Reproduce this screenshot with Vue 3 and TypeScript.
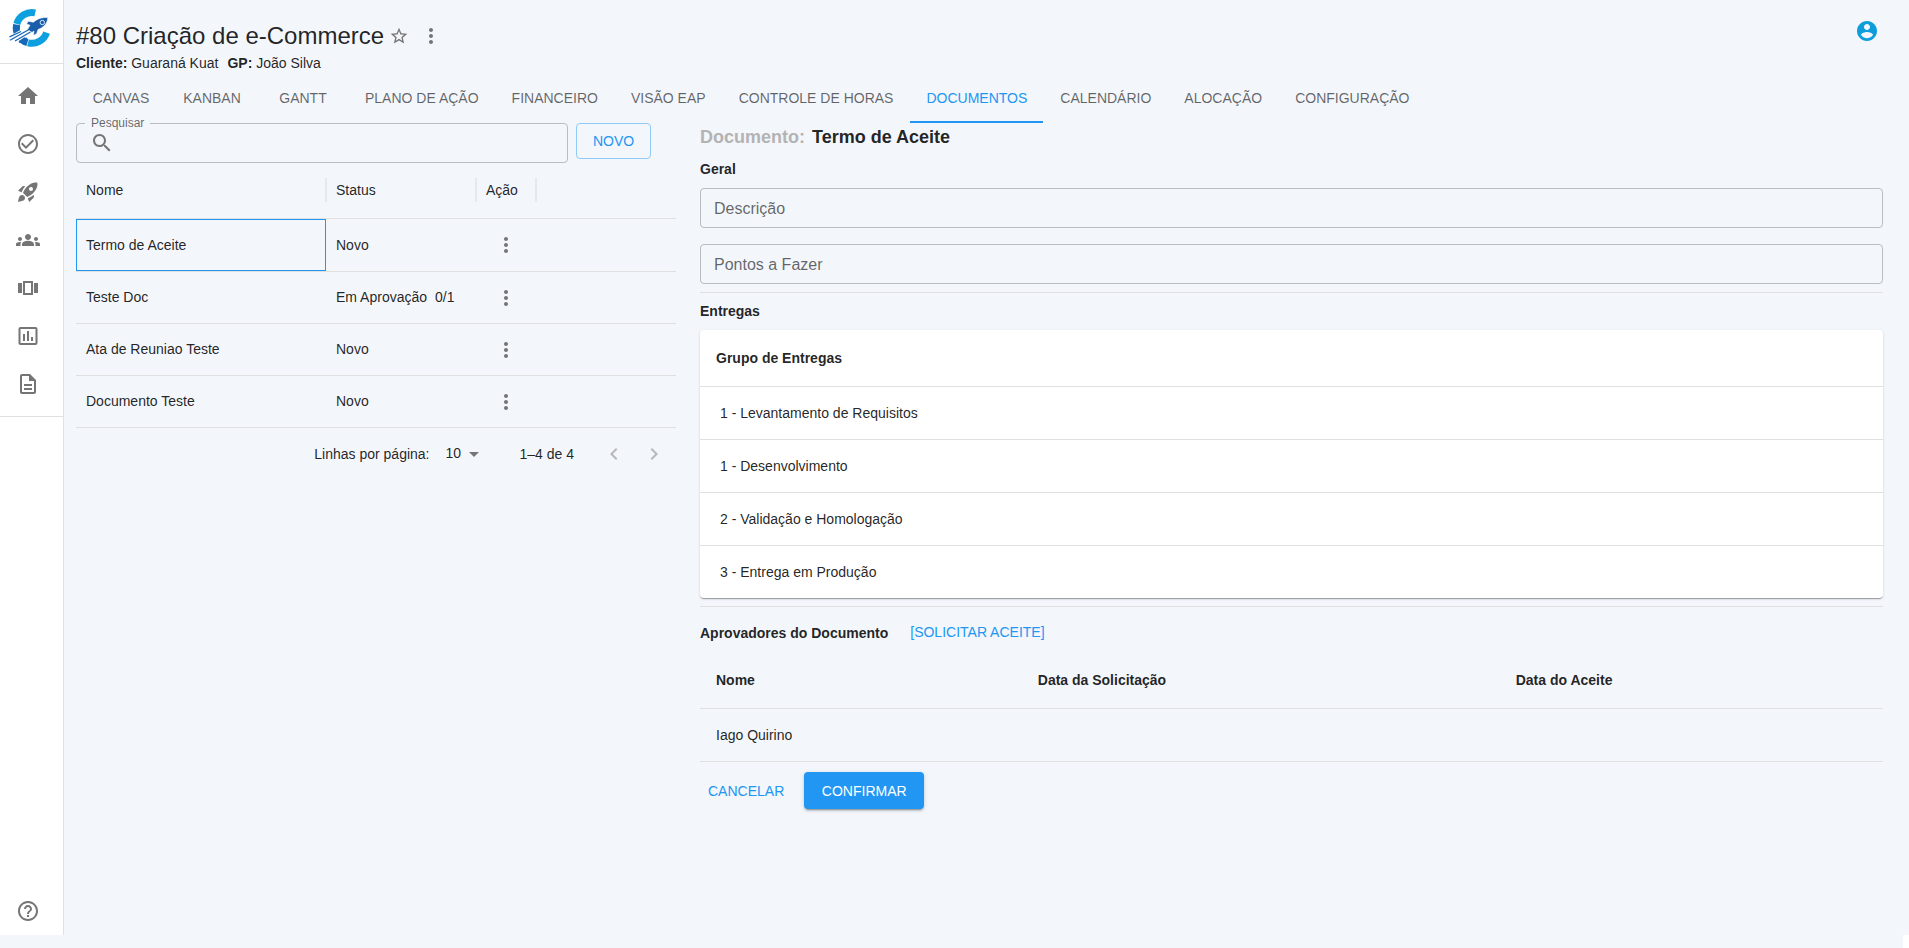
<script setup lang="ts">
import { computed, ref } from 'vue'

interface DocumentRow {
  id: number
  name: string
  status: string
  approvals?: string
}

interface NavItem {
  label: string
  path: string
}

const navItems: NavItem[] = [
  { label: 'Início', path: 'M10 20v-6h4v6h5v-8h3L12 3 2 12h3v8z' },
  { label: 'Tarefas', path: 'M16.59 7.58L10 14.17l-3.59-3.58L5 12l5 5 8-8zM12 2C6.48 2 2 6.48 2 12s4.48 10 10 10 10-4.48 10-10S17.52 2 12 2zm0 18c-4.42 0-8-3.58-8-8s3.58-8 8-8 8 3.58 8 8-3.58 8-8 8z' },
  { label: 'Projetos', path: 'M9.19 6.35c-2.04 2.29-3.44 5.58-3.57 5.89L2 10.69l4.05-4.05c.47-.47 1.15-.68 1.81-.55l1.33.26zM11.17 17s3.74-1.55 5.89-3.7c5.4-5.4 4.5-9.62 4.21-10.57-.95-.3-5.17-1.19-10.57 4.21C8.55 9.09 7 12.83 7 12.83L11.17 17zm6.48-2.19c-2.29 2.04-5.58 3.44-5.89 3.57L13.31 22l4.05-4.05c.47-.47.68-1.15.55-1.81l-.26-1.33zM9 18c0 .83-.34 1.58-.88 2.12C6.94 21.3 2 22 2 22s.7-4.94 1.88-6.12A2.996 2.996 0 0 1 9 18zm4-9c0-1.1.9-2 2-2s2 .9 2 2-.9 2-2 2-2-.9-2-2z' },
  { label: 'Equipes', path: 'M12 12.75c1.63 0 3.07.39 4.24.9 1.08.48 1.76 1.56 1.76 2.73V18H6v-1.61c0-1.18.68-2.26 1.76-2.73 1.17-.52 2.61-.91 4.24-.91zM4 13c1.1 0 2-.9 2-2s-.9-2-2-2-2 .9-2 2 .9 2 2 2zm1.13 1.1c-.37-.06-.74-.1-1.13-.1-.99 0-1.93.21-2.78.58C.48 14.9 0 15.62 0 16.43V18h4.5v-1.61c0-.83.23-1.61.63-2.29zM20 13c1.1 0 2-.9 2-2s-.9-2-2-2-2 .9-2 2 .9 2 2 2zm4 3.43c0-.81-.48-1.53-1.22-1.85-.85-.37-1.79-.58-2.78-.58-.39 0-.76.04-1.13.1.4.68.63 1.46.63 2.29V18H24v-1.57zM12 6c1.66 0 3 1.34 3 3s-1.34 3-3 3-3-1.34-3-3 1.34-3 3-3z' },
  { label: 'Quadros', path: 'M2 7h4v10H2V7zm5 12h10V5H7v14zM9 7h6v10H9V7zm9 0h4v10h-4V7z' },
  { label: 'Relatórios', path: 'M9 17H7v-7h2v7zm4 0h-2V7h2v10zm4 0h-2v-4h2v4zm2.5 2.1h-15V5h15v14.1zm0-16.1h-15c-1.1 0-2 .9-2 2v14c0 1.1.9 2 2 2h15c1.1 0 2-.9 2-2V5c0-1.1-.9-2-2-2z' },
  { label: 'Documentos', path: 'M8 16h8v2H8zm0-4h8v2H8zm6-10H6c-1.1 0-2 .9-2 2v16c0 1.1.89 2 1.99 2H18c1.1 0 2-.9 2-2V8l-6-6zm4 18H6V4h7v5h5v11z' },
]

const helpPath = 'M11 18h2v-2h-2v2zm1-16C6.48 2 2 6.48 2 12s4.48 10 10 10 10-4.48 10-10S17.52 2 12 2zm0 18c-4.41 0-8-3.59-8-8s3.59-8 8-8 8 3.59 8 8-3.59 8-8 8zm0-14c-2.21 0-4 1.79-4 4h2c0-1.1.9-2 2-2s2 .9 2 2c0 2-3 1.75-3 5h2c0-2.25 3-2.5 3-5 0-2.21-1.79-4-4-4z'
const morePath = 'M12 8c1.1 0 2-.9 2-2s-.9-2-2-2-2 .9-2 2 .9 2 2 2zm0 2c-1.1 0-2 .9-2 2s.9 2 2 2 2-.9 2-2-.9-2-2-2zm0 6c-1.1 0-2 .9-2 2s.9 2 2 2 2-.9 2-2-.9-2-2-2z'
const starPath = 'M22 9.24l-7.19-.62L12 2 9.19 8.63 2 9.24l5.46 4.73L5.82 21 12 17.27 18.18 21l-1.63-7.03L22 9.24zM12 15.4l-3.76 2.27 1-4.28-3.32-2.88 4.38-.38L12 6.1l1.71 4.04 4.38.38-3.32 2.88 1 4.28L12 15.4z'
const accountPath = 'M12 2C6.48 2 2 6.48 2 12s4.48 10 10 10 10-4.48 10-10S17.52 2 12 2zm0 3c1.66 0 3 1.34 3 3s-1.34 3-3 3-3-1.34-3-3 1.34-3 3-3zm0 14.2c-2.5 0-4.71-1.28-6-3.22.03-1.99 4-3.08 6-3.08 1.99 0 5.97 1.09 6 3.08-1.29 1.94-3.5 3.22-6 3.22z'
const searchPath = 'M15.5 14h-.79l-.28-.27C15.41 12.59 16 11.11 16 9.5 16 5.91 13.09 3 9.5 3S3 5.91 3 9.5 5.91 16 9.5 16c1.61 0 3.09-.59 4.23-1.57l.27.28v.79l5 4.99L20.49 19l-4.99-5zm-6 0C7.01 14 5 11.99 5 9.5S7.01 5 9.5 5 14 7.01 14 9.5 11.99 14 9.5 14z'

const tabs = ['Canvas', 'Kanban', 'Gantt', 'Plano de Ação', 'Financeiro', 'Visão EAP', 'Controle de Horas', 'Documentos', 'Calendário', 'Alocação', 'Configuração']
const activeTab = ref('Documentos')

const documents: DocumentRow[] = [
  { id: 1, name: 'Termo de Aceite', status: 'Novo' },
  { id: 2, name: 'Teste Doc', status: 'Em Aprovação', approvals: '0/1' },
  { id: 3, name: 'Ata de Reuniao Teste', status: 'Novo' },
  { id: 4, name: 'Documento Teste', status: 'Novo' },
]
const selectedId = ref(1)
const selected = computed(() => documents.find((d) => d.id === selectedId.value))

const search = ref('')
const filtered = computed(() =>
  documents.filter((d) => d.name.toLowerCase().includes(search.value.toLowerCase())),
)
const pageSize = ref(10)
const description = ref('')
const todo = ref('')

const deliveries = ['1 - Levantamento de Requisitos', '1 - Desenvolvimento', '2 - Validação e Homologação', '3 - Entrega em Produção']
const approvers = [{ name: 'Iago Quirino', requested: '', accepted: '' }]
</script>

<template>
  <div class="app">
    <aside class="sidebar">
      <a class="logo" href="#" aria-label="Página inicial">
        <svg width="44" height="44" viewBox="8 6 44 44" aria-hidden="true">
          <g fill="none" stroke-width="7">
            <path d="M35.2 12.8A15.5 15.5 0 0 0 16.8 24" stroke="#0ea0de" />
            <path d="M16.6 24.6A15.5 15.5 0 0 0 27.4 42.6" stroke="#1768b7" />
            <path d="M28 42.8A15.5 15.5 0 0 0 46.6 32.6" stroke="#0ea0de" />
          </g>
          <path d="M9 36.5L29 25l5 6-16 10.5z" fill="#fff" />
          <path d="M47.8 17.6C41 17 36.5 19.5 33.5 22.2L28.3 21.2 26.5 24l3.5 1.2L27.5 29.5 32 32.5 34 31l-.6 4.5 3.2-1.8 1.4-4.2C42.5 28 47.500 24.500 47.800 17.600z" fill="#1a5dab" stroke="#fff" stroke-width=".6" />
          <circle cx="42.3" cy="22.5" r="2.2" fill="#1a5dab" stroke="#d8ecfa" stroke-width="1" />
          <path d="M9.5 36.8L21 31.5M10 40.3L29 29.5M15 41L30.5 32M19 42.5L27 38" stroke="#1768b7" stroke-width="1.3" fill="none" />
        </svg>
      </a>
      <nav class="nav" aria-label="Principal">
        <a v-for="item in navItems" :key="item.label" class="nav-link" href="#" :aria-label="item.label">
          <svg class="icon" viewBox="0 0 24 24" aria-hidden="true"><path :d="item.path" /></svg>
        </a>
      </nav>
      <a class="nav-link help" href="#" aria-label="Ajuda">
        <svg class="icon" viewBox="0 0 24 24" aria-hidden="true"><path :d="helpPath" /></svg>
      </a>
    </aside>

    <main class="main">
      <header class="header">
        <div>
          <div class="title-row">
            <h1>#80 Criação de e-Commerce</h1>
            <button class="icon-button star" type="button" aria-label="Favoritar">
              <svg class="icon small" viewBox="0 0 24 24" aria-hidden="true"><path :d="starPath" /></svg>
            </button>
            <button class="icon-button" type="button" aria-label="Opções do projeto">
              <svg class="icon" viewBox="0 0 24 24" aria-hidden="true"><path :d="morePath" /></svg>
            </button>
          </div>
          <p class="meta">
            <span><b>Cliente:</b> Guaraná Kuat</span>
            <span><b>GP:</b> João Silva</span>
          </p>
        </div>
        <button class="icon-button account" type="button" aria-label="Conta">
          <svg class="icon" viewBox="0 0 24 24" aria-hidden="true"><path :d="accountPath" /></svg>
        </button>
      </header>

      <div class="tabs" role="tablist">
        <button
          v-for="tab in tabs"
          :key="tab"
          class="tab"
          :class="{ active: tab === activeTab }"
          type="button"
          role="tab"
          :aria-selected="tab === activeTab"
          @click="activeTab = tab"
        >{{ tab }}</button>
      </div>

      <div class="columns">
        <section class="list">
          <div class="toolbar">
            <div class="search">
              <label for="search">Pesquisar</label>
              <svg class="icon" viewBox="0 0 24 24" aria-hidden="true"><path :d="searchPath" /></svg>
              <input id="search" v-model="search" type="text">
            </div>
            <button class="button outlined" type="button">Novo</button>
          </div>

          <table class="grid">
            <colgroup><col class="col-name"><col class="col-status"><col class="col-action"><col></colgroup>
            <thead>
              <tr>
                <th scope="col"><span>Nome</span></th>
                <th scope="col"><span>Status</span></th>
                <th scope="col"><span>Ação</span></th>
                <td></td>
              </tr>
            </thead>
            <tbody>
              <tr v-for="doc in filtered" :key="doc.id">
                <td :class="{ selected: doc.id === selectedId }" @click="selectedId = doc.id">{{ doc.name }}</td>
                <td>{{ doc.status }}<span v-if="doc.approvals" class="approvals">{{ doc.approvals }}</span></td>
                <td class="action">
                  <button class="icon-button" type="button" :aria-label="'Ações de ' + doc.name">
                    <svg class="icon" viewBox="0 0 24 24" aria-hidden="true"><path :d="morePath" /></svg>
                  </button>
                </td>
                <td></td>
              </tr>
            </tbody>
          </table>

          <div class="pagination">
            <label for="page-size">Linhas por página:</label>
            <div class="select">
              <select id="page-size" v-model="pageSize">
                <option :value="10">10</option>
                <option :value="25">25</option>
                <option :value="50">50</option>
              </select>
              <svg class="icon" viewBox="0 0 24 24" aria-hidden="true"><path d="M7 10l5 5 5-5z" /></svg>
            </div>
            <span class="range">1–{{ filtered.length }} de {{ filtered.length }}</span>
            <button class="page-button" type="button" disabled aria-label="Página anterior">
              <svg class="icon" viewBox="0 0 24 24" aria-hidden="true"><path d="M15.41 7.41L14 6l-6 6 6 6 1.41-1.41L10.83 12z" /></svg>
            </button>
            <button class="page-button" type="button" disabled aria-label="Próxima página">
              <svg class="icon" viewBox="0 0 24 24" aria-hidden="true"><path d="M10 6L8.59 7.41 13.17 12l-4.58 4.59L10 18l6-6z" /></svg>
            </button>
          </div>
        </section>

        <section class="detail">
          <h2><span>Documento:</span> {{ selected?.name }}</h2>
          <h3>Geral</h3>
          <div class="fields">
            <input v-model="description" type="text" placeholder="Descrição" aria-label="Descrição">
            <input v-model="todo" type="text" placeholder="Pontos a Fazer" aria-label="Pontos a Fazer">
          </div>
          <hr>
          <h3>Entregas</h3>
          <div class="card">
            <table class="table">
              <thead>
                <tr><th scope="col">Grupo de Entregas</th></tr>
              </thead>
              <tbody>
                <tr v-for="item in deliveries" :key="item"><td class="delivery">{{ item }}</td></tr>
              </tbody>
            </table>
          </div>
          <hr>
          <div class="approvers-head">
            <h3>Aprovadores do Documento</h3>
            <button class="link-button" type="button">[Solicitar Aceite]</button>
          </div>
          <table class="table approvers">
            <colgroup><col class="col-approver"><col class="col-requested"><col></colgroup>
            <thead>
              <tr>
                <th scope="col">Nome</th>
                <th scope="col">Data da Solicitação</th>
                <th scope="col">Data do Aceite</th>
              </tr>
            </thead>
            <tbody>
              <tr v-for="person in approvers" :key="person.name">
                <td>{{ person.name }}</td>
                <td>{{ person.requested }}</td>
                <td>{{ person.accepted }}</td>
              </tr>
            </tbody>
          </table>
          <div class="actions">
            <button class="button text" type="button">Cancelar</button>
            <button class="button contained" type="button">Confirmar</button>
          </div>
        </section>
      </div>
    </main>
    <span class="scroll-corner" aria-hidden="true"></span>
  </div>
</template>

<style>
body {
  margin: 0;
  background: #f3f6fb;
}
</style>

<style scoped>
* {
  box-sizing: border-box;
}

.app {
  display: flex;
  min-height: 100vh;
  background: #f3f6fb;
  color: rgba(0, 0, 0, 0.87);
  font-family: "Liberation Sans", Arial, sans-serif;
  font-size: 14px;
  line-height: 20px;
}

button,
input,
select {
  font: inherit;
  color: inherit;
}

button {
  padding: 0;
  border: 0;
  background: none;
  cursor: pointer;
}

h1,
h2,
h3,
p {
  margin: 0;
}

.icon {
  display: block;
  flex: none;
  width: 24px;
  height: 24px;
  fill: #757575;
}

.icon.small {
  width: 20px;
  height: 20px;
}

.icon-button {
  display: inline-flex;
}

.sidebar {
  position: sticky;
  top: 0;
  display: flex;
  flex: none;
  flex-direction: column;
  width: 64px;
  height: calc(100vh - 13px);
  border-right: 1px solid #e0e0e0;
  background: #fff;
}

.logo {
  display: flex;
  height: 64px;
  padding: 6px 8px;
  border-bottom: 1px solid #e0e0e0;
}

.nav {
  padding: 8px 0;
  border-bottom: 1px solid #e0e0e0;
}

.nav-link {
  display: flex;
  align-items: center;
  height: 48px;
  padding-left: 16px;
}

.help {
  margin-top: auto;
}

.main {
  flex: 1;
  min-width: 0;
  padding: 0 26px 24px 12px;
}

.header {
  display: flex;
  justify-content: space-between;
  height: 75px;
  padding-top: 20px;
}

.title-row {
  display: flex;
  align-items: center;
  height: 32px;
}

h1 {
  font-size: 24px;
  font-weight: 400;
  line-height: 32px;
}

.star {
  margin: 0 10px 0 5px;
}

.meta {
  display: flex;
  gap: 9px;
  padding-top: 1px;
}

.account {
  align-self: flex-start;
  margin: -1px 4px 0 0;
}

.account .icon {
  fill: #0d9ddb;
}

.tabs {
  display: flex;
  gap: 1px;
}

.tab {
  min-width: 90px;
  height: 48px;
  padding: 0 16px;
  border-bottom: 2px solid transparent;
  color: rgba(0, 0, 0, 0.6);
  text-transform: uppercase;
  white-space: nowrap;
}

.tab.active {
  border-bottom-color: #2196f3;
  color: #2196f3;
}

.columns {
  display: grid;
  grid-template-columns: 600px minmax(0, 1fr);
  gap: 24px;
}

.toolbar {
  display: flex;
  align-items: flex-start;
  gap: 8px;
}

.search {
  position: relative;
  display: flex;
  align-items: center;
  width: 492px;
  height: 40px;
  padding: 0 13px;
  border: 1px solid #b9bcc0;
  border-radius: 4px;
}

.search label {
  position: absolute;
  top: -9px;
  left: 8px;
  padding: 0 6px;
  background: #f3f6fb;
  color: rgba(0, 0, 0, 0.6);
  font-size: 12px;
  line-height: 16px;
}

.search input {
  flex: 1;
  min-width: 0;
  margin-left: 8px;
  border: 0;
  outline: 0;
  background: none;
  font-size: 16px;
}

.button {
  height: 36px;
  padding: 0 16px;
  border-radius: 4px;
  text-transform: uppercase;
}

.outlined {
  border: 1px solid #90caf9;
  color: #2196f3;
}

.text {
  height: 37px;
  padding: 0 8px;
  color: #2196f3;
}

.contained {
  min-width: 120px;
  height: 37px;
  background: #2196f3;
  box-shadow: 0 3px 1px -2px rgba(0, 0, 0, 0.2), 0 2px 2px 0 rgba(0, 0, 0, 0.14), 0 1px 5px 0 rgba(0, 0, 0, 0.12);
  color: #fff;
}

.grid,
.table {
  width: 100%;
  border-collapse: separate;
  border-spacing: 0;
  text-align: left;
}

.grid,
.approvers {
  table-layout: fixed;
}

.col-name {
  width: 250px;
}

.col-status {
  width: 150px;
}

.col-action {
  width: 60px;
}

.grid th,
.grid td {
  height: 52px;
  padding: 0 10px 1px;
  border-bottom: 1px solid #e0e0e0;
  font-weight: 400;
}

.grid thead th {
  height: 56px;
  padding-right: 0;
}

.grid tbody tr:first-child td {
  height: 53px;
}

.grid th span {
  display: block;
  margin-right: -1px;
  border-right: 2px solid #e6e8ec;
  line-height: 24px;
}

.grid td.selected {
  box-shadow: inset 0 0 0 1px #2196f3;
}

.grid td.action {
  padding: 0 18px;
}

.action .icon-button {
  display: flex;
}

.approvals {
  margin-left: 8px;
}

.pagination {
  display: flex;
  align-items: center;
  justify-content: flex-end;
  height: 52px;
  padding-right: 2px;
}

.select {
  position: relative;
  margin: 0 34px 0 6px;
}

.select select {
  display: block;
  width: 50px;
  height: 24px;
  padding: 0 24px 2px 10px;
  border: 0;
  background: none;
  appearance: none;
}

.select .icon {
  position: absolute;
  top: 0;
  right: 0;
  pointer-events: none;
}

.range {
  margin-right: 20px;
}

.page-button {
  display: flex;
  justify-content: center;
  width: 40px;
}

.page-button .icon {
  fill: #b6b8bc;
}

h2 {
  padding-top: 2px;
  font-size: 18px;
  font-weight: 700;
  line-height: 24px;
}

h2 span {
  margin-right: 2px;
  color: #b3b3b3;
}

h3 {
  font-size: 14px;
  font-weight: 700;
  line-height: 20px;
}

.detail > h3 {
  padding: 10px 0 9px;
}

.fields {
  display: grid;
  gap: 16px;
}

.fields input {
  width: 100%;
  height: 40px;
  padding: 2px 13px 0;
  border: 1px solid #b9bcc0;
  border-radius: 4px;
  background: none;
  font-size: 16px;
}

.fields input::placeholder {
  color: rgba(0, 0, 0, 0.6);
  opacity: 1;
}

hr {
  height: 1px;
  margin: 8px 0 0;
  border: 0;
  background: #e0e0e0;
}

.detail > hr + h3 {
  padding: 8px 0 9px;
}

.card {
  overflow: hidden;
  border-radius: 4px;
  background: #fff;
  box-shadow: 0 2px 1px -1px rgba(0, 0, 0, 0.2), 0 1px 1px 0 rgba(0, 0, 0, 0.14), 0 1px 3px 0 rgba(0, 0, 0, 0.12);
}

.table th,
.table td {
  height: 53px;
  padding: 0 16px;
  border-bottom: 1px solid #e0e0e0;
}

.table th {
  height: 57px;
  font-weight: 700;
}

.table td.delivery {
  padding-left: 20px;
}

.card tbody tr:last-child td {
  height: 52px;
  border-bottom: 0;
}

.approvers-head {
  display: flex;
  align-items: center;
  gap: 22px;
  height: 45px;
  padding-top: 6px;
}

.link-button {
  padding-bottom: 2px;
  color: #2196f3;
  text-transform: uppercase;
}

.col-approver {
  width: 27.2%;
}

.col-requested {
  width: 40.4%;
}

.actions {
  display: flex;
  gap: 12px;
  padding-top: 10px;
}

.scroll-corner {
  position: fixed;
  right: 0;
  bottom: 0;
  width: 6px;
  height: 13px;
  background: #fff;
}
</style>
